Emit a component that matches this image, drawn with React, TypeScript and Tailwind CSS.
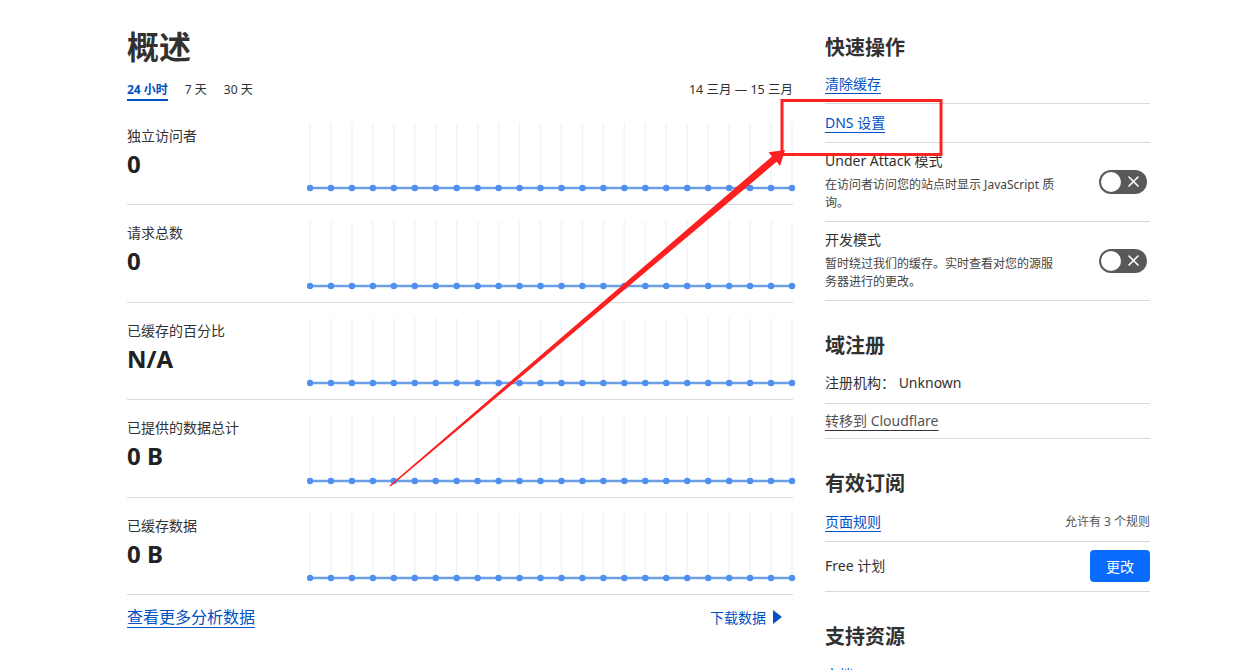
import React from "react";

const FONT = { fontFamily: '"Noto Sans", "Noto Sans CJK SC", sans-serif' };

const POINTS = Array.from({ length: 24 }, (_, i) => 3 + i * (482 / 23));

const Spark = () => (
  <svg width="489" height="72" className="mt-[12.5px] -ml-[3px] shrink-0">
    {POINTS.map((x) => (
      <line key={"g" + x} x1={x} x2={x} y1={3} y2={68} stroke="#edf4fd" strokeWidth="1.5" />
    ))}
    <line x1={3} x2={485} y1={68} y2={68} stroke="#6c9fe8" strokeWidth="2.5" />
    {POINTS.map((x) => (
      <circle key={"d" + x} cx={x} cy={68} r={3.2} fill="#4f8ff0" />
    ))}
  </svg>
);

const stats = [
  { label: "独立访问者", value: "0" },
  { label: "请求总数", value: "0" },
  { label: "已缓存的百分比", value: "N/A" },
  { label: "已提供的数据总计", value: "0 B" },
  { label: "已缓存数据", value: "0 B" },
];

const Toggle = () => (
  <div className="flex h-[24px] w-[48px] shrink-0 items-center justify-between rounded-full bg-[#595959] pl-[2px] pr-[8px]">
    <span className="h-[20px] w-[20px] rounded-full bg-white" />
    <svg width="11" height="11" viewBox="0 0 11 11">
      <path d="M1 1L10 10M10 1L1 10" stroke="white" strokeWidth="1.6" strokeLinecap="round" />
    </svg>
  </div>
);

const Heading = ({ children, className = "" }: { children: React.ReactNode; className?: string }) => (
  <h2 className={`text-[20px] font-bold leading-[28px] text-[#313131] ${className}`}>{children}</h2>
);

const BlueLink = ({ children }: { children: React.ReactNode }) => (
  <a className="text-[#0051c3] underline decoration-1 underline-offset-[4px]">{children}</a>
);

export default function App() {
  return (
    <div className="relative h-[670px] w-[1247px] overflow-hidden bg-white text-[#313131]" style={FONT}>
      <div className="flex gap-[32px] pl-[127px] pt-[27px]">
        {/* Overview */}
        <div className="w-[666px]">
          <h1 className="text-[32px] font-bold leading-[40px] text-[#313131]">概述</h1>
          <div className="mt-[14px] flex h-[19px] items-start justify-between text-[12px]">
            <div className="flex gap-[17px]">
              <span className="border-b-2 border-[#0051c3] font-bold leading-[18px] text-[#0051c3]">24 小时</span>
              <span className="leading-[18px]">7 天</span>
              <span className="leading-[18px]">30 天</span>
            </div>
            <span className="text-[12.5px] leading-[18px]">14 三月 — 15 三月</span>
          </div>
          <div className="mt-[7.5px]">
            {stats.map((s) => (
              <div key={s.label} className="box-border flex h-[97.5px] border-b border-[#d9d9d9]">
                <div className="w-[183px] shrink-0 pt-[18px]">
                  <div className="text-[14px] leading-[20px] text-[#333]">{s.label}</div>
                  <div className="mt-[2px] text-[24px] font-bold leading-[32px] text-[#222]">{s.value}</div>
                </div>
                <Spark />
              </div>
            ))}
          </div>
          <div className="flex items-center justify-between pt-[10px]">
            <a className="text-[16px] leading-[24px] text-[#0051c3] underline decoration-1 underline-offset-[4px]">
              查看更多分析数据
            </a>
            <span className="mr-[11px] flex items-center gap-[7px] text-[14px] text-[#0051c3]">
              下载数据
              <svg width="9" height="14" viewBox="0 0 9 14">
                <polygon points="0,0 9,7 0,14" fill="#0051c3" />
              </svg>
            </span>
          </div>
        </div>

        {/* Sidebar */}
        <div className="w-[325px] pt-[7px] text-[14px]">
          <Heading>快速操作</Heading>
          <div className="mt-[2px]">
            <div className="border-b border-[#d9d9d9] pb-[9px] pt-[10px] leading-[20px]">
              <BlueLink>清除缓存</BlueLink>
            </div>
            <div className="border-b border-[#d9d9d9] py-[9px] leading-[20px]">
              <BlueLink>DNS 设置</BlueLink>
            </div>
            <div className="flex items-center justify-between border-b border-[#d9d9d9] pb-[9px] pt-[8px]">
              <div>
                <div className="leading-[20px]">Under Attack 模式</div>
                <p className="mt-[5px] w-[238px] text-[12px] leading-[18px] text-[#444]">
                  在访问者访问您的站点时显示 JavaScript 质询。
                </p>
              </div>
              <div className="mr-[3px]">
                <Toggle />
              </div>
            </div>
            <div className="flex items-center justify-between border-b border-[#d9d9d9] pb-[9px] pt-[8px]">
              <div>
                <div className="leading-[20px]">开发模式</div>
                <p className="mt-[5px] w-[238px] text-[12px] leading-[18px] text-[#444]">
                  暂时绕过我们的缓存。实时查看对您的源服务器进行的更改。
                </p>
              </div>
              <div className="mr-[3px]">
                <Toggle />
              </div>
            </div>
          </div>

          <Heading className="mt-[31px]">域注册</Heading>
          <div className="mt-[4px]">
            <div className="border-b border-[#d9d9d9] pb-[10px] pt-[9px] leading-[20px]">注册机构： Unknown</div>
            <div className="border-b border-[#d9d9d9] py-[7px] leading-[20px]">
              <a className="text-[#555] underline decoration-[#333] decoration-1 underline-offset-[4px]">
                转移到 Cloudflare
              </a>
            </div>
          </div>

          <Heading className="mt-[31px]">有效订阅</Heading>
          <div className="mt-[4px]">
            <div className="flex items-center justify-between border-b border-[#d9d9d9] pb-[9px] pt-[10px] leading-[20px]">
              <BlueLink>页面规则</BlueLink>
              <span className="text-[12px] text-[#555]">允许有 3 个规则</span>
            </div>
            <div className="flex items-center justify-between border-b border-[#d9d9d9] pb-[9px] pt-[8px]">
              <span className="leading-[20px]">Free 计划</span>
              <button className="h-[32px] w-[60px] rounded-[4px] bg-[#0a6cff] text-[14px] text-white">更改</button>
            </div>
          </div>

          <Heading className="mt-[31px]">支持资源</Heading>
          <div className="mt-[4px] pt-[10px] leading-[20px]">
            <BlueLink>文档</BlueLink>
          </div>
        </div>
      </div>

      {/* Annotation overlay */}
      <svg className="pointer-events-none absolute inset-0" width="1247" height="670">
        <rect x="782" y="100.5" width="159" height="54" fill="none" stroke="#fc2323" strokeWidth="3" />
        <polygon
          points="389.5,485.5 772,156.4 768.5,152.2 785,150 780.1,166 776.6,161.8 390.5,486.5"
          fill="#fc2020"
        />
      </svg>
    </div>
  );
}
